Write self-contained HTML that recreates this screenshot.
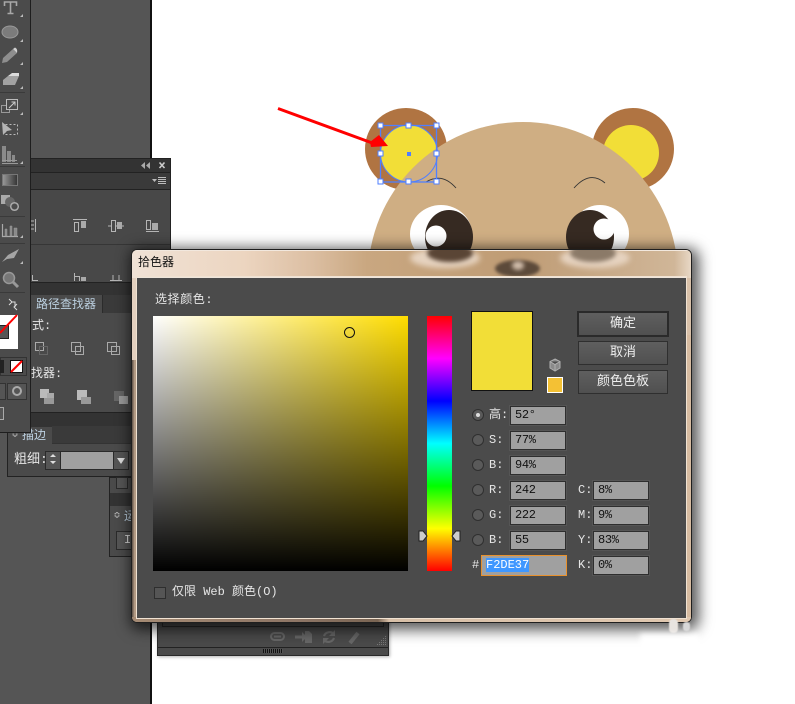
<!DOCTYPE html>
<html><head><meta charset="utf-8">
<style>
html,body{margin:0;padding:0;width:795px;height:704px;overflow:hidden;background:#fff}
*{box-sizing:border-box}
#r{position:relative;width:795px;height:704px;overflow:hidden;font-family:"Liberation Mono","WenQuanYi Zen Hei","Noto Sans CJK SC",monospace;font-size:12px;color:#e6e6e6}
.a{position:absolute}
.t{position:absolute;white-space:nowrap;line-height:14px}
.f{position:absolute;width:56px;height:19px;background:#a0a0a0;border:1px solid #2e2e2e;color:#111;padding-left:4px;line-height:16px;font-size:12px;letter-spacing:-.3px;box-shadow:0 0 0 1px #555}
.rd{position:absolute;width:12px;height:12px;border-radius:50%;background:#5a5a5a;border:1px solid #2f2f2f}
.b{position:absolute;left:578px;width:90px;height:24px;background:linear-gradient(#5f5f5f,#505050);border:1px solid #2f2f2f;text-align:center;line-height:22px;font-size:13px;color:#eee}
</style></head><body><div id="r">
<div class="a" style="left:0;top:0;width:150px;height:704px;background:#555"></div>
<div class="a" style="left:150px;top:0;width:2px;height:704px;background:#111"></div>

<svg class="a" style="left:0;top:0" width="795" height="704" viewBox="0 0 795 704">
<circle cx="406" cy="149" r="41" fill="#b07442"/>
<circle cx="633" cy="149" r="41" fill="#b07442"/>
<circle cx="409" cy="153.5" r="28.5" fill="#f2de37"/>
<circle cx="631" cy="153" r="28" fill="#f2de37"/>
<circle cx="523" cy="277" r="155" fill="#cfae83"/>
<path d="M426 182Q442 172 456 188M574 188Q590 170 605 183" fill="none" stroke="#333" stroke-width=".9"/>
<ellipse cx="441" cy="234" rx="31" ry="29" fill="#fff"/>
<ellipse cx="600" cy="234" rx="29" ry="29" fill="#fff"/>
<ellipse cx="449" cy="237" rx="24" ry="27" fill="#362a22"/>
<ellipse cx="590" cy="237" rx="24" ry="27" fill="#362a22"/>
<circle cx="436" cy="236" r="10.5" fill="#fff"/>
<circle cx="604" cy="229" r="10.5" fill="#fff"/>
<circle cx="409" cy="153.5" r="28.5" fill="none" stroke="#4f7fff" stroke-width="1"/>
<rect x="380.500" y="125.500" width="56" height="56.500" fill="none" stroke="#4f7fff" stroke-width="1.300"/>
<g fill="#fff" stroke="#4f7fff">
<rect x="378" y="123" width="5" height="5"/><rect x="406" y="123" width="5" height="5"/><rect x="434" y="123" width="5" height="5"/>
<rect x="378" y="151" width="5" height="5"/><rect x="434" y="151" width="5" height="5"/>
<rect x="378" y="179" width="5" height="5"/><rect x="406" y="179" width="5" height="5"/><rect x="434" y="179" width="5" height="5"/>
</g>
<rect x="407" y="152" width="4" height="4" fill="#4f7fff"/>
<path d="M278 108.500L375 144" stroke="#f00" stroke-width="3"/>
<path d="M388 146L379 135L370 142L371 147Z" fill="#f00"/>
</svg>

<!-- align panel -->
<div class="a" style="left:30px;top:158px;width:141px;height:138px;background:#484848;border:1px solid #222"></div>
<div class="a" style="left:31px;top:159px;width:139px;height:13px;background:#333"></div>
<div class="a" style="left:31px;top:172px;width:139px;height:18px;background:#3a3a3a;border-top:1px solid #222;border-bottom:1px solid #222"></div>
<div class="a" style="left:31px;top:244px;width:139px;height:1px;background:#363636"></div>
<div class="a" style="left:31px;top:282px;width:110px;height:13px;background:#333;border-top:1px solid #222"></div>
<svg class="a" style="left:0;top:0" width="200" height="300" fill="none" stroke="#b5b5b5">
<path d="M145 162L141 165.500L145 169ZM150 162L146 165.500L150 169Z" fill="#aaa" stroke="none"/>
<path d="M159.500 162.500L164.500 168M164.500 162.500L159.500 168" stroke="#ccc" stroke-width="1.600"/>
<path d="M158 177.500H166M158 179.500H166M158 181.500H166M158 183.500H166" stroke="#bbb"/>
<path d="M152 179H157L154.500 182Z" fill="#bbb" stroke="none"/>
<path d="M31 221H34M31 225H34M31 229H34M35.500 219V232"/>
<path d="M73 219.500H87"/><rect x="74.500" y="222.500" width="4" height="9"/><rect x="81" y="221" width="5" height="7" fill="#aaa" stroke="none"/>
<path d="M108 226H124"/><rect x="111.500" y="220.500" width="4" height="11" fill="#484848"/><rect x="117" y="222" width="5" height="7" fill="#aaa" stroke="none"/>
<path d="M146 231.500H159"/><rect x="146.500" y="220.500" width="4" height="9"/><rect x="152" y="223" width="6" height="7" fill="#aaa" stroke="none"/>
<path d="M32.500 275V280.500H38M74.500 273V281M74.500 276.500H79.500V281M113 281V275M119 281V275M110 280.500H122"/>
<rect x="81" y="277" width="5" height="4" fill="#aaa" stroke="none"/>
</svg>

<!-- pathfinder -->
<div class="a" style="left:31px;top:295px;width:110px;height:18px;background:#3a3a3a"></div>
<div class="a" style="left:31px;top:295px;width:72px;height:19px;background:#4a4a4a;border-right:1px solid #2b2b2b"></div>
<div class="a" style="left:31px;top:313px;width:110px;height:99px;background:#4a4a4a"></div>
<div class="t" style="left:36px;top:298px;color:#bcd0e0;font-size:12px">路径查找器</div>
<div class="t" style="left:32px;top:319px;font-size:12px">式:</div>
<div class="t" style="left:31px;top:367px;font-size:12px">找器:</div>
<svg class="a" style="left:0;top:300px" width="140" height="150" fill="none" stroke="#aaa">
<rect x="35.500" y="42.500" width="8" height="8"/><rect x="39.500" y="46.500" width="8" height="8" stroke="#666"/>
<rect x="71.500" y="42.500" width="9" height="9"/><rect x="75.500" y="46.500" width="8" height="8"/>
<rect x="107.500" y="42.500" width="9" height="9"/><rect x="111.500" y="46.500" width="8" height="8"/>
<rect x="40" y="89" width="9" height="9" fill="#bbb" stroke="none"/><rect x="47" y="93" width="7" height="7" fill="#aaa" stroke="none"/><rect x="44" y="98" width="10" height="6" fill="#999" stroke="none"/>
<rect x="77" y="90" width="10" height="10" fill="#bbb" stroke="none"/><rect x="81" y="97" width="10" height="7" fill="#999" stroke="none"/>
<rect x="114" y="91" width="10" height="10" fill="#666" stroke="none"/><rect x="119" y="96" width="9" height="8" fill="#999" stroke="none"/>
</svg>
<div class="a" style="left:31px;top:412px;width:110px;height:15px;background:#333;border-top:1px solid #222"></div>

<!-- stroke -->
<div class="a" style="left:7px;top:427px;width:125px;height:50px;background:#4a4a4a;border:1px solid #222;border-top:0"></div>
<div class="a" style="left:52px;top:426px;width:80px;height:18px;background:#3a3a3a;border-bottom:1px solid #333"></div>
<div class="t" style="left:22px;top:429px;color:#bcd0e0">描边</div>
<div class="t" style="left:12px;top:429px;color:#ccc;font-size:10px">≎</div>
<div class="t" style="left:14px;top:453px;font-size:13px">粗细:</div>
<div class="a" style="left:45px;top:451px;width:84px;height:19px;background:#a0a0a0;border:1px solid #2a2a2a"></div>
<div class="a" style="left:45px;top:451px;width:16px;height:19px;background:#555;border:1px solid #2a2a2a"></div>
<div class="a" style="left:113px;top:451px;width:16px;height:19px;background:#555;border:1px solid #2a2a2a"></div>
<svg class="a" style="left:0;top:440px" width="140" height="40" fill="#ddd"><path d="M53 14L56 17H50ZM53 24L56 21H50ZM117 18H125L121 24Z"/></svg>

<!-- side bits -->
<div class="a" style="left:109px;top:477px;width:24px;height:80px;background:#4a4a4a;border:1px solid #222"></div>
<div class="a" style="left:110px;top:493px;width:22px;height:13px;background:#333"></div>
<div class="a" style="left:116px;top:477px;width:12px;height:12px;background:#555;border:1px solid #2a2a2a"></div>
<div class="t" style="left:114px;top:510px;color:#ccc;font-size:10px">≎</div>
<div class="t" style="left:124px;top:510px;color:#bcd0e0">运</div>
<div class="a" style="left:116px;top:531px;width:16px;height:19px;background:#555;border:1px solid #2a2a2a;color:#ddd;padding-left:7px;line-height:17px">I</div>

<!-- toolbar -->
<div class="a" style="left:0;top:0;width:31px;height:433px;background:#4b4b4b;border-right:1px solid #1e1e1e;border-bottom:1px solid #1e1e1e"></div>
<svg class="a" style="left:0;top:0" width="31" height="433" fill="none" stroke="#aaa">
<defs><linearGradient id="g"><stop offset="0" stop-color="#9a9a9a"/><stop offset="1" stop-color="#333"/></linearGradient></defs>
<path d="M4.500 6V2H16.500V6M10.500 2V13.500M7.500 13.500H13.500" stroke="#a8a8a8" stroke-width="1.600"/>
<ellipse cx="10" cy="32" rx="8" ry="6" fill="#7c7c7c" stroke="#9a9a9a"/>
<path d="M2 63L3 58L13 49L17 53L7 62Z" fill="#8e8e8e" stroke="none"/><path d="M13 49L15 47.500Q18 49 17 53Z" fill="#d0d0d0" stroke="none"/>
<path d="M3 85V80L8 76H19L15 85Z" fill="#a2a2a2" stroke="none"/><path d="M8 76L12 73H19V76Z" fill="#dcdcdc" stroke="none"/>
<rect x="1.500" y="105.500" width="8" height="7" stroke="#999"/><rect x="6.500" y="99.500" width="11" height="10" fill="#4b4b4b" stroke="#bbb"/><path d="M9 108L15 102M11.500 102H15V105.500" stroke="#ccc"/>
<rect x="5.500" y="124.500" width="12" height="10" stroke-dasharray="2 2" stroke="#bbb"/><path d="M2 122L12 130L7 131L3 135Z" fill="#b5b5b5" stroke="none"/>
<path d="M2 146H6V162H2ZM7 151H11V162H7ZM12 155H15V162H12Z" fill="#8a8a8a" stroke="none"/><path d="M2 163.500H18M2 160.500H17" stroke="#999"/>
<rect x="2.500" y="174.500" width="15" height="11" fill="url(#g)" stroke="#777"/>
<rect x="1" y="195" width="9" height="9" fill="#aaa" stroke="none"/><circle cx="10" cy="202" r="5" fill="#666" stroke="none"/><circle cx="14.500" cy="206.500" r="3.800" stroke-width="1.500" fill="#4b4b4b"/>
<path d="M2.500 224V236.500H18" stroke-width="1.200"/><path d="M5 236V229H7V236ZM10 236V226H12V236ZM14 236V228H17V236Z" fill="#8a8a8a" stroke="#999" stroke-width=".5"/>
<path d="M2 262L8 255L19 249L14 258L7 259Z" fill="#a5a5a5" stroke="none"/>
<circle cx="9" cy="278" r="5.500" fill="#777" stroke="#999" stroke-width="1.500"/><path d="M13 282L18 287" stroke="#999" stroke-width="3"/>
<g fill="#bbb" stroke="none">
<path d="M20 17h3v-3zM20 42h3v-3zM20 65h3v-3zM20 89h3v-3zM20 115h3v-3zM20 164h3v-3zM20 238h3v-3zM20 264h3v-3z"/>
</g>
<path d="M0 92.500H25M0 166.500H25M0 216.500H25M0 243.500H25M0 292.500H25" stroke="#3a3a3a"/>
<path d="M9 299L12 302L9 305M12 302H15V307M17 304L14 307L17 310" stroke="#ddd" stroke-width="1"/>
</svg>
<div class="a" style="left:0;top:315px;width:18px;height:34px;background:#fff"></div>
<div class="a" style="left:0;top:325px;width:9px;height:14px;background:#555;border:1px solid #222;border-left:0"></div>
<svg class="a" style="left:0;top:314px" width="19" height="35"><path d="M0 19L17 1" stroke="#f00" stroke-width="2"/></svg>
<div class="a" style="left:0;top:357px;width:27px;height:19px;background:#4b4b4b;border:1px solid #333"></div>
<div class="a" style="left:0;top:360px;width:4px;height:13px;background:#222"></div>
<div class="a" style="left:10px;top:360px;width:13px;height:13px;background:#fff;border:1px solid #111"></div>
<svg class="a" style="left:10px;top:360px" width="13" height="13"><path d="M1 12L12 1" stroke="#f00" stroke-width="2"/></svg>
<div class="a" style="left:0;top:383px;width:6px;height:17px;background:#555;border:1px solid #333;border-left:0"></div>
<div class="a" style="left:7px;top:383px;width:20px;height:17px;background:#555;border:1px solid #333"></div>
<svg class="a" style="left:7px;top:383px" width="20" height="17"><circle cx="10" cy="8" r="4" fill="none" stroke="#aaa" stroke-width="2"/></svg>
<div class="a" style="left:0;top:407px;width:4px;height:13px;background:#555;border:1px solid #aaa;border-left:0"></div>

<!-- bottom panel -->
<div class="a" style="left:157px;top:615px;width:232px;height:41px;background:#4a4a4a;border:1px solid #2a2a2a;box-shadow:1px 1px 3px rgba(0,0,0,.3)"></div>
<div class="a" style="left:158px;top:647px;width:230px;height:1px;background:#222"></div>
<div class="a" style="left:263px;top:649px;width:20px;height:4px;background:repeating-linear-gradient(90deg,#111 0 1px,#555 1px 2px)"></div>
<svg class="a" style="left:260px;top:625px" width="130" height="28" fill="none" stroke="#676767" stroke-width="2">
<rect x="11" y="8" width="13" height="7" rx="3.500"/><path d="M14 11.500H21"/>
<path d="M35 12H44" stroke-width="3"/><path d="M42 7L47 12L42 17Z" fill="#676767" stroke="none"/><path d="M45 6H49L52 9V18H45Z" fill="#676767" stroke="none"/>
<path d="M64 11A6 6 0 0 1 74 9M74 13A6 6 0 0 1 64 15" stroke-width="2.200"/><path d="M75 5V11H69ZM63 19V13H69Z" fill="#676767" stroke="none"/>
<path d="M90 18L98 8" stroke-width="4"/>
</svg>
<svg class="a" style="left:376px;top:635px" width="11" height="12" fill="#777">
<path d="M9 1h1v1h-1zM9 3h1v1h-1zM7 3h1v1h-1zM9 5h1v1h-1zM7 5h1v1h-1zM5 5h1v1h-1zM9 7h1v1h-1zM7 7h1v1h-1zM5 7h1v1h-1zM3 7h1v1h-1zM9 9h1v1h-1zM7 9h1v1h-1zM5 9h1v1h-1zM3 9h1v1h-1zM1 9h1v1h-1z"/>
</svg>
<div class="a" style="left:162px;top:615px;width:222px;height:12px;border:1px solid #2a2a2a;border-top:0"></div>

<!-- dialog -->
<div class="a" style="left:131px;top:249px;width:561px;height:374px;border-radius:6px;box-shadow:3px 3px 14px 4px rgba(0,0,0,.65)"></div>
<div class="a" style="left:131px;top:249px;width:561px;height:374px;border-radius:6px;border:1px solid #1f1f1f;overflow:hidden;background:linear-gradient(90deg,#e3d0bf 0,#d8c0a8 100%)">
  <div class="a" style="left:0;top:0;width:559px;height:28px;background:linear-gradient(90deg,#f0e2d6 0,#ecd5c0 20%,#dcbfa3 32%,#c9a780 42%,#bf9c75 69%,#d0b698 97%,#e8d8c6 100%);border-top:1px solid #f2e8de"></div>
  <div class="a" style="left:278px;top:-2px;width:70px;height:20px;border-radius:50%;background:#e6d3c0;filter:blur(3px)"></div>
  <div class="a" style="left:295px;top:-6px;width:46px;height:18px;border-radius:50%;background:#5a4535;filter:blur(2px)"></div>
  <div class="a" style="left:428px;top:-2px;width:70px;height:20px;border-radius:50%;background:#e6d3c0;filter:blur(3px)"></div>
  <div class="a" style="left:438px;top:-6px;width:46px;height:18px;border-radius:50%;background:#8b7a68;filter:blur(2px)"></div>
  <div class="a" style="left:363px;top:10px;width:45px;height:17px;border-radius:50%;background:#5c4a3a;filter:blur(1.5px)"></div>
  <div class="a" style="left:380px;top:11px;width:12px;height:9px;border-radius:50%;background:#d0bcaa;filter:blur(2px)"></div>
  <div class="a" style="left:0;top:110px;width:6px;height:262px;background:linear-gradient(90deg,#5b4e45,#c2a88f 50%,#6b5a4c)"></div>
  <div class="a" style="left:553px;top:85px;width:6px;height:287px;background:#d7bba0"></div>
  <div class="a" style="left:0;top:367px;width:559px;height:5px;background:linear-gradient(90deg,#a58b74 0,#8d7565 30%,#7a6553 44%,#d8c0a8 46%,#e0c8b0 100%)"></div>
</div>
<div class="a" style="left:137px;top:277px;width:549px;height:341px;background:#4b4b4b;border-top:1px solid #eee5db;box-shadow:0 0 0 1px #f0e2d2"></div>
<div class="t" style="left:138px;top:255px;color:#111;font-size:12px;font-family:'WenQuanYi Zen Hei','Liberation Sans',sans-serif">拾色器</div>
<div class="t" style="left:155px;top:293px;font-size:12px;letter-spacing:.6px">选择颜色:</div>

<div class="a" style="left:153px;top:316px;width:255px;height:255px;background:linear-gradient(#0000,#000),linear-gradient(90deg,#fff,#ffdd00)"></div>
<div class="a" style="left:344px;top:327px;width:11px;height:11px;border-radius:50%;border:1px solid #111"></div>

<div class="a" style="left:427px;top:316px;width:25px;height:255px;background:linear-gradient(#f00 0,#f0f 16.67%,#00f 33.33%,#0ff 50%,#0f0 66.67%,#ff0 83.33%,#f00 100%)"></div>
<svg class="a" style="left:418px;top:530px" width="44" height="12"><path d="M1 1H5L9 6L5 11H1Z" fill="#ccc" stroke="#222"/><path d="M42 1H38L34 6L38 11H42Z" fill="#ccc" stroke="#222"/></svg>

<div class="a" style="left:471px;top:311px;width:62px;height:80px;background:#f2de37;border:1px solid #111"></div>
<svg class="a" style="left:548px;top:358px" width="14" height="14" fill="#8a8a8a" stroke="#b0b0b0"><path d="M7 1L12 3.500V10L7 13L2 10V3.500ZM2 3.500L7 6.500L12 3.500M7 6.500V13"/></svg>
<div class="a" style="left:547px;top:377px;width:16px;height:16px;background:#f4c134;border:1px solid #fff"></div>

<div class="b" style="left:577px;top:311px;width:92px;height:26px;border:2px solid #2a2a2a">确定</div>
<div class="b" style="top:341px">取消</div>
<div class="b" style="top:370px">颜色色板</div>

<div class="rd" style="left:472px;top:409px"></div><div class="a" style="left:476px;top:413px;width:4px;height:4px;border-radius:50%;background:#ddd"></div>
<div class="rd" style="left:472px;top:434px"></div><div class="rd" style="left:472px;top:459px"></div><div class="rd" style="left:472px;top:484px"></div><div class="rd" style="left:472px;top:509px"></div><div class="rd" style="left:472px;top:534px"></div>

<div class="t" style="left:489px;top:408px">高:</div>
<div class="t" style="left:489px;top:433px">S:</div>
<div class="t" style="left:489px;top:458px">B:</div>
<div class="t" style="left:489px;top:483px">R:</div>
<div class="t" style="left:489px;top:508px">G:</div>
<div class="t" style="left:489px;top:533px">B:</div>
<div class="t" style="left:472px;top:558px">#</div>

<div class="f" style="left:510px;top:406px">52°</div>
<div class="f" style="left:510px;top:431px">77%</div>
<div class="f" style="left:510px;top:456px">94%</div>
<div class="f" style="left:510px;top:481px">242</div>
<div class="f" style="left:510px;top:506px">222</div>
<div class="f" style="left:510px;top:531px">55</div>
<div class="a" style="left:481px;top:555px;width:86px;height:21px;background:#a0a0a0;border:1px solid #e8912d"></div>
<div class="a" style="left:486px;top:558px;width:43px;height:14px;background:#3f97ff;color:#fff;line-height:14px;font-size:12px">F2DE37</div>

<div class="t" style="left:578px;top:483px">C:</div>
<div class="t" style="left:578px;top:508px">M:</div>
<div class="t" style="left:578px;top:533px">Y:</div>
<div class="t" style="left:578px;top:558px">K:</div>
<div class="f" style="left:593px;top:481px">8%</div>
<div class="f" style="left:593px;top:506px">9%</div>
<div class="f" style="left:593px;top:531px">83%</div>
<div class="f" style="left:593px;top:556px">0%</div>

<div class="a" style="left:154px;top:587px;width:12px;height:12px;background:#555;border:1px solid #2e2e2e"></div>
<div class="t" style="left:172px;top:585px">仅限 Web 颜色(O)</div>

<!-- white blobs over the shadow, bottom right -->
<div class="a" style="left:669px;top:619px;width:9px;height:14px;border-radius:4px;background:#e8e4e0;filter:blur(.6px)"></div>
<div class="a" style="left:683px;top:622px;width:7px;height:9px;border-radius:3px;background:#d8d8d8;filter:blur(.6px)"></div>
<div class="a" style="left:640px;top:634px;width:60px;height:14px;background:#fff;filter:blur(3px)"></div>
</div></body></html>
